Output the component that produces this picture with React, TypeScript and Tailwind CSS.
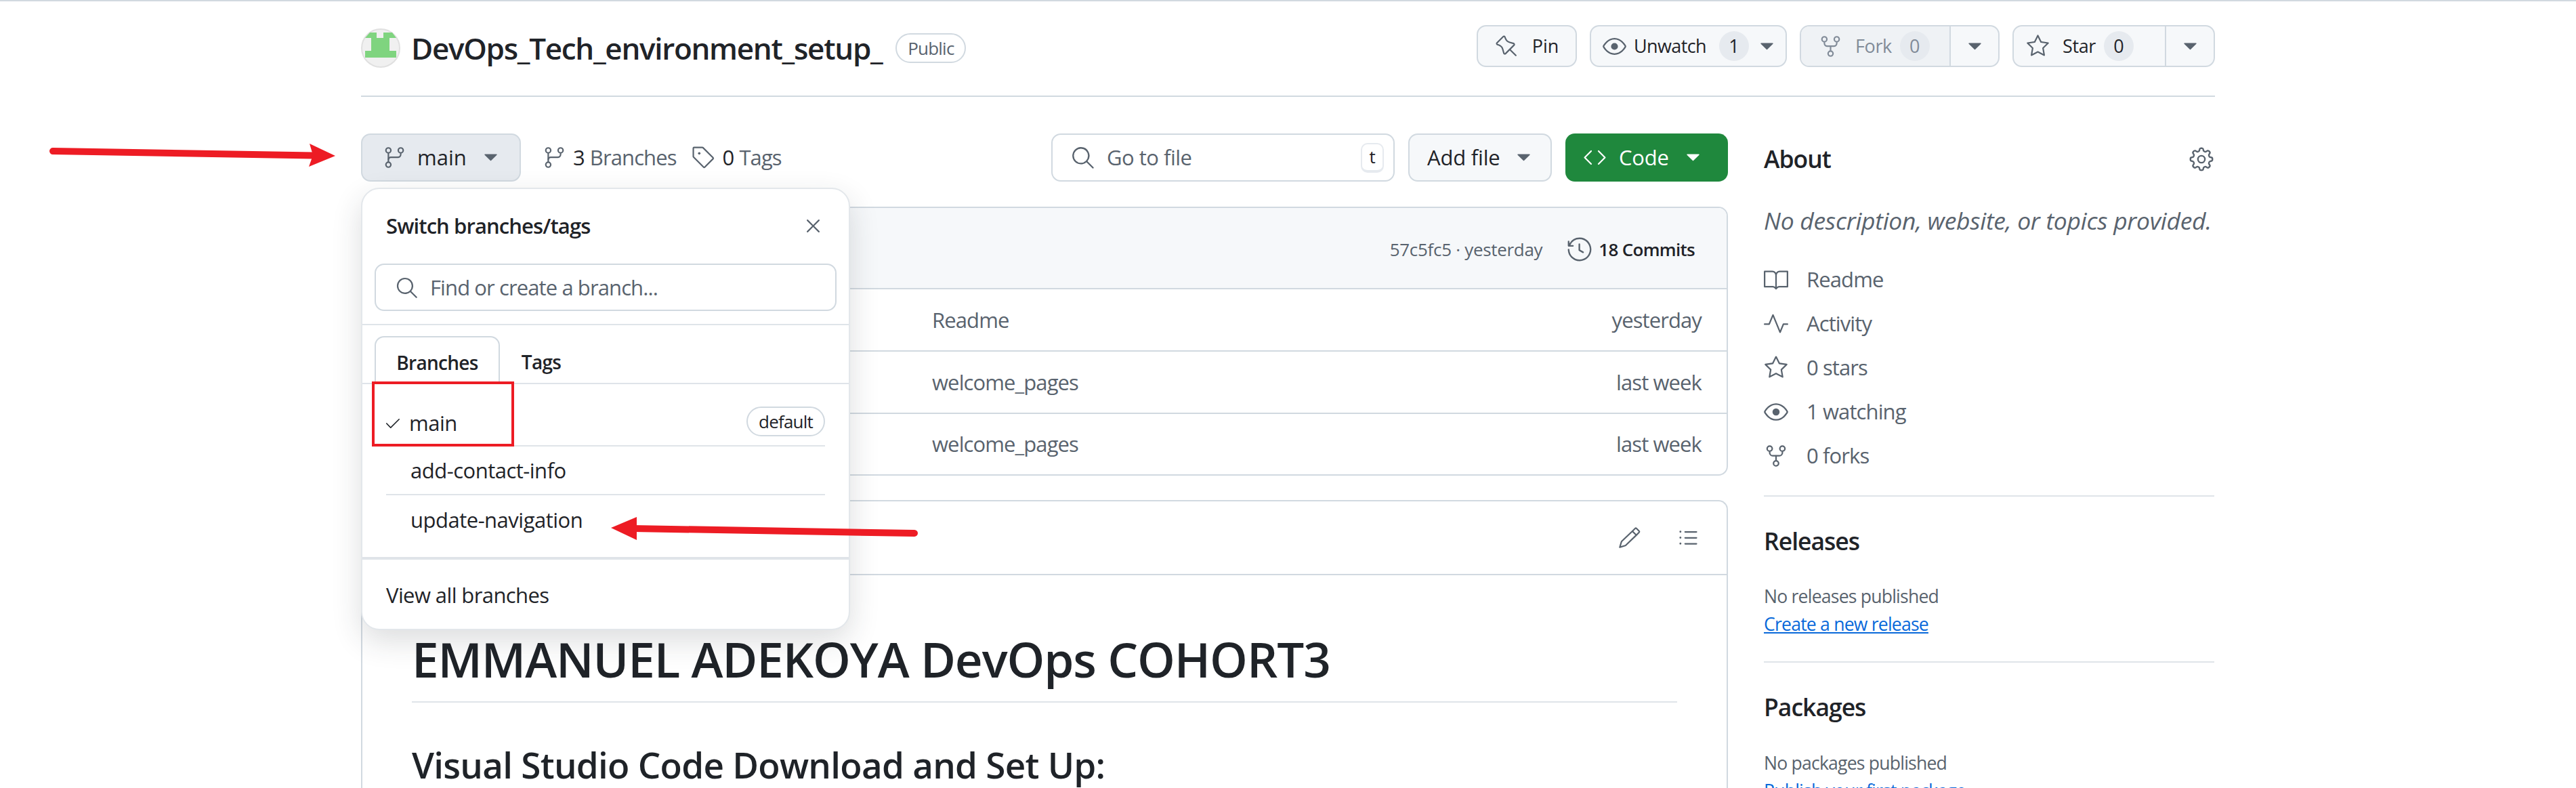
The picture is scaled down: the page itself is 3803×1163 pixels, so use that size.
import type { ReactNode } from "react";
import {
  GoBook,
  GoCheck,
  GoCode,
  GoEye,
  GoGear,
  GoGitBranch,
  GoHistory,
  GoListUnordered,
  GoPencil,
  GoPin,
  GoPulse,
  GoRepoForked,
  GoSearch,
  GoStar,
  GoTag,
  GoTriangleDown,
  GoX,
} from "react-icons/go";

const iconGray = "text-[#59636e]";

function Counter({ value, muted }: { value: string; muted?: boolean }) {
  return (
    <span
      className={`flex h-[44px] w-[44px] items-center justify-center rounded-full bg-[#e6eaef] text-[27px] ${
        muted ? "text-[#818b98]" : "text-[#1f2328]"
      }`}
    >
      {value}
    </span>
  );
}

function Caret({ className }: { className?: string }) {
  return <GoTriangleDown className={`h-[35px] w-[35px] ${className ?? iconGray}`} />;
}

function SplitButton({
  icon,
  label,
  count,
  width,
  left,
  disabled,
}: {
  icon: ReactNode;
  label: string;
  count: string;
  width: string;
  left: string;
  disabled?: boolean;
}) {
  return (
    <div className={`flex h-[62px] overflow-hidden rounded-[14px] border-2 border-[#d1d9e0] bg-[#f6f8fa] ${width}`}>
      <div
        className={`flex items-center border-r-2 border-[#d1d9e0] ${left} ${
          disabled ? "bg-[#eff2f5] text-[#818b98]" : "text-[#1f2328]"
        }`}
      >
        {icon}
        <span className="ml-[19px] text-[27px] font-medium tracking-[-0.4px]">{label}</span>
        <span className="ml-[12px]">
          <Counter value={count} muted={disabled} />
        </span>
      </div>
      <div className="flex flex-1 items-center justify-center">
        <Caret />
      </div>
    </div>
  );
}

function RepoHeader() {
  return (
    <div className="flex h-[106px] items-start justify-between border-b-2 border-[#d1d9e0]">
      <div className="mt-[5px] flex items-center">
        <div className="flex h-[58px] w-[58px] items-center justify-center rounded-full border-2 border-[#e0e0e0] bg-[#f0f0f0]">
          <svg viewBox="2 2 54 54" className="h-[54px] w-[54px]">
            <path
              d="M13 6 L23 6 L23 14 L33 14 L33 6 L46 6 L52 14 L42 14 L42 33 L52 33 L52 43 L6 43 L6 33 L15 33 L15 14 L6 14 Z"
              fill="#7fd47f"
            />
          </svg>
        </div>
        <h1 className="ml-[16px] text-[44px] font-semibold leading-none tracking-[-1.3px] text-[#1f2328]">
          DevOps_Tech_environment_setup_
        </h1>
        <span className="ml-[20px] flex h-[44px] w-[104px] items-center justify-center rounded-full border-2 border-[#d1d9e0] text-[26px] font-medium tracking-[-0.8px] text-[#59636e]">
          Public
        </span>
      </div>
      <div className="flex gap-[19px]">
        <div className="flex h-[62px] w-[148px] items-center justify-center gap-[20px] rounded-[14px] border-2 border-[#d1d9e0] bg-[#f6f8fa] text-[27px] font-medium text-[#1f2328]">
          <GoPin className={`h-[35px] w-[35px] ${iconGray}`} />
          Pin
        </div>
        <div className="flex h-[62px] w-[291px] items-center rounded-[14px] border-2 border-[#d1d9e0] bg-[#f6f8fa] pl-[17px] text-[27px] font-medium text-[#1f2328]">
          <GoEye className={`h-[35px] w-[35px] ${iconGray}`} />
          <span className="ml-[11px] tracking-[-0.6px]">Unwatch</span>
          <span className="ml-[19px]">
            <Counter value="1" />
          </span>
          <Caret className={`ml-[9px] ${iconGray}`} />
        </div>
        <SplitButton
          icon={<GoRepoForked className="h-[35px] w-[35px] text-[#818b98]" />}
          label="Fork"
          count="0"
          width="w-[295px]"
          left="w-[221px] pl-[26px]"
          disabled
        />
        <SplitButton
          icon={<GoStar className={`h-[35px] w-[35px] ${iconGray}`} />}
          label="Star"
          count="0"
          width="w-[299px]"
          left="w-[225px] pl-[18px]"
        />
      </div>
    </div>
  );
}

function Toolbar() {
  return (
    <div className="flex h-[71px] items-center">
      <div className="flex h-[71px] w-[236px] items-center rounded-[14px] border-2 border-[#d1d9e0] bg-[#e6eaef] pl-[30px] text-[31px] font-medium text-[#1f2328]">
        <GoGitBranch className={`h-[35px] w-[35px] ${iconGray}`} />
        <span className="ml-[16px]">main</span>
        <Caret className={`ml-[18px] ${iconGray}`} />
      </div>
      <div className="ml-[32px] flex items-center text-[31px] tracking-[-0.9px]">
        <GoGitBranch className={`h-[35px] w-[35px] ${iconGray}`} />
        <span className="ml-[10px] font-medium text-[#1f2328]">3</span>
        <span className="ml-[8px] text-[#59636e]">Branches</span>
        <GoTag className={`ml-[22px] h-[35px] w-[35px] ${iconGray}`} />
        <span className="ml-[11px] font-medium text-[#1f2328]">0</span>
        <span className="ml-[8px] text-[#59636e]">Tags</span>
      </div>
      <div className="ml-auto flex h-[71px] w-[507px] items-center rounded-[14px] border-2 border-[#d1d9e0] bg-white pl-[26px] pr-[14px] text-[31px] tracking-[-0.5px] text-[#59636e]">
        <GoSearch className={`h-[37px] w-[37px] ${iconGray}`} />
        <span className="ml-[17px]">Go to file</span>
        <span className="ml-auto flex h-[44px] w-[34px] items-center justify-center rounded-[10px] border-2 border-[#e6eaef] border-b-4 text-[26px] text-[#1f2328]">
          t
        </span>
      </div>
      <div className="ml-[20px] flex h-[71px] w-[212px] items-center rounded-[14px] border-2 border-[#d1d9e0] bg-[#f6f8fa] pl-[26px] text-[31px] font-medium tracking-[-0.2px] text-[#1f2328]">
        Add file
        <Caret className={`ml-[18px] ${iconGray}`} />
      </div>
      <div className="ml-[20px] flex h-[71px] w-[240px] items-center rounded-[14px] bg-[#1f883d] pl-[26px] text-[31px] font-medium tracking-[-0.2px] text-white">
        <GoCode className="h-[35px] w-[35px]" />
        <span className="ml-[18px]">Code</span>
        <Caret className="ml-[18px] text-white" />
      </div>
    </div>
  );
}

function FileTable() {
  const rows = [
    { message: "Readme", when: "yesterday", height: "h-[92px]" },
    { message: "welcome_pages", when: "last week", height: "h-[92px]" },
    { message: "welcome_pages", when: "last week", height: "h-[91px]" },
  ];
  return (
    <div className="mt-[37px] overflow-hidden rounded-[14px] border-2 border-[#d1d9e0]">
      <div className="flex h-[118px] items-center justify-end bg-[#f6f8fa] pr-[47px] pt-[4px] text-[26px]">
        <span className="tracking-[-0.3px] text-[#59636e]">57c5fc5 · yesterday</span>
        <GoHistory className={`ml-[36px] h-[38px] w-[38px] ${iconGray}`} />
        <span className="ml-[9px] font-semibold tracking-[-0.7px] text-[#1f2328]">18 Commits</span>
      </div>
      {rows.map((row, i) => (
        <div
          key={i}
          className={`flex items-center justify-between border-t-2 border-[#d1d9e0] pl-[841px] pr-[37px] text-[31px] tracking-[-0.9px] text-[#59636e] ${row.height}`}
        >
          <span>{row.message}</span>
          <span>{row.when}</span>
        </div>
      ))}
    </div>
  );
}

function Readme() {
  return (
    <div className="mt-[36px] h-[500px] rounded-t-[14px] border-x-2 border-t-2 border-[#d1d9e0]">
      <div className="flex h-[109px] items-center justify-end gap-[52px] border-b-2 border-[#d1d9e0] pr-[39px]">
        <GoPencil className={`h-[35px] w-[35px] ${iconGray}`} />
        <GoListUnordered className={`h-[35px] w-[35px] ${iconGray}`} />
      </div>
      <div className="px-[73px]">
        <h1 className="mt-[76px] border-b-2 border-[#dfe4e9] pb-[14px] text-[71px] font-semibold leading-[96px] tracking-[-1.1px] text-[#1f2328]">
          EMMANUEL ADEKOYA DevOps COHORT3
        </h1>
        <h2 className="mt-[56px] text-[53px] font-semibold leading-[72px] tracking-[-0.75px] text-[#1f2328]">
          Visual Studio Code Download and Set Up:
        </h2>
      </div>
    </div>
  );
}

function BranchMenu() {
  return (
    <div className="absolute left-[533px] top-[277px] z-10 h-[653px] w-[722px] overflow-hidden rounded-[27px] border-2 border-[#e3e7eb] bg-white shadow-[0_16px_44px_rgba(37,41,47,0.16)]">
      <div className="flex h-[110px] items-center justify-between pb-[2px] pl-[35px] pr-[35px]">
        <span className="text-[31px] font-semibold tracking-[-0.9px] text-[#1f2328]">Switch branches/tags</span>
        <GoX className={`h-[35px] w-[35px] ${iconGray}`} />
      </div>
      <div className="mx-[18px] flex h-[70px] items-center rounded-[14px] border-2 border-[#d1d9e0] pl-[28px] text-[31px] tracking-[-0.9px] text-[#59636e]">
        <GoSearch className={`h-[35px] w-[35px] ${iconGray}`} />
        <span className="ml-[17px]">Find or create a branch...</span>
      </div>
      <div className="mt-[19px] flex h-[89px] items-end border-y-2 border-[#dfe4e9] pl-[18px] pt-[18px]">
        <div className="-mb-[2px] flex h-[71px] w-[185px] items-center justify-center rounded-t-[14px] border-2 border-b-0 border-[#d1d9e0] bg-white pt-[4px] text-[28px] font-semibold tracking-[-0.7px] text-[#1f2328]">
          Branches
        </div>
        <div className="-mb-[2px] flex h-[71px] w-[122px] items-center justify-center pt-[4px] text-[28px] font-semibold tracking-[-0.7px] text-[#1f2328]">
          Tags
        </div>
      </div>
      <div className="mx-[35px] text-[31px] tracking-[-0.5px] text-[#1f2328]">
        <div className="flex h-[92px] items-center justify-between border-b-2 border-[#dfe4e9] pt-[20px]">
          <div className="flex items-center pt-[5px]">
            <GoCheck className="-ml-[3px] h-[26px] w-[26px]" />
            <span className="ml-[11px]">main</span>
          </div>
          <span className="flex h-[44px] w-[116px] items-center justify-center rounded-full border-2 border-[#d1d9e0] text-[26px] font-medium tracking-[-0.8px]">
            default
          </span>
        </div>
        <div className="flex h-[72px] items-center border-b-2 border-[#dfe4e9] pl-[36px]">add-contact-info</div>
        <div className="flex h-[72px] items-center pl-[36px]">update-navigation</div>
      </div>
      <div className="mt-[19px] flex h-[108px] items-center border-t-4 border-[#dfe4e9] pl-[35px] text-[31px] tracking-[-0.6px] text-[#1f2328]">
        View all branches
      </div>
    </div>
  );
}

function AboutRow({ icon, children }: { icon: ReactNode; children: ReactNode }) {
  return (
    <div className="flex h-[65px] items-center gap-[27px] text-[31px] tracking-[-0.9px] text-[#59636e]">
      {icon}
      <span>{children}</span>
    </div>
  );
}

function Sidebar() {
  const iconClass = `h-[36px] w-[36px] ${iconGray}`;
  return (
    <aside className="ml-[53px] w-[665px] shrink-0 text-[#1f2328]">
      <div className="flex h-[71px] items-center justify-between pt-[5px]">
        <h2 className="text-[35.5px] font-semibold tracking-[-1px]">About</h2>
        <GoGear className="h-[38px] w-[38px] text-[#59636e]" />
      </div>
      <p className="mt-[32px] whitespace-nowrap text-[35.5px] italic leading-[50px] tracking-[-0.3px] text-[#59636e]">
        No description, website, or topics provided.
      </p>
      <div className="mt-[30px]">
        <AboutRow icon={<GoBook className={iconClass} />}>Readme</AboutRow>
        <AboutRow icon={<GoPulse className={iconClass} />}>Activity</AboutRow>
        <AboutRow icon={<GoStar className={iconClass} />}>0 stars</AboutRow>
        <AboutRow icon={<GoEye className={iconClass} />}>1 watching</AboutRow>
        <AboutRow icon={<GoRepoForked className={iconClass} />}>0 forks</AboutRow>
      </div>
      <section className="mt-[26px] h-[245px] border-t-2 border-[#dfe4e9] pt-[43px]">
        <h2 className="text-[35.5px] font-semibold leading-[44px] tracking-[-1px]">Releases</h2>
        <p className="mt-[40px] text-[26.6px] leading-[40px] tracking-[-0.8px] text-[#59636e]">No releases published</p>
        <a className="mt-[1px] block text-[26.6px] leading-[40px] tracking-[-0.8px] text-[#0969da] underline">Create a new release</a>
      </section>
      <section className="h-[245px] border-t-2 border-[#dfe4e9] pt-[43px]">
        <h2 className="text-[35.5px] font-semibold leading-[44px] tracking-[-1px]">Packages</h2>
        <p className="mt-[41px] text-[26.6px] leading-[40px] tracking-[-0.8px] text-[#59636e]">No packages published</p>
        <a className="mt-[1px] block text-[26.6px] leading-[40px] tracking-[-0.8px] text-[#0969da] underline">Publish your first package</a>
      </section>
    </aside>
  );
}

function Annotations() {
  return (
    <>
      <div className="absolute left-[549px] top-[563px] z-20 h-[96px] w-[210px] border-4 border-[#ed1c24]" />
      <svg className="absolute left-0 top-0 z-20 h-[1163px] w-[3803px]" viewBox="0 0 3803 1163" fill="none">
        <path d="M78 223 L462 229.5" stroke="#ed1c24" strokeWidth="10" strokeLinecap="round" />
        <path d="M457 212 L495 230 L456 246 L462 229 Z" fill="#ed1c24" />
        <path d="M1350 787 L935 780" stroke="#ed1c24" strokeWidth="10" strokeLinecap="round" />
        <path d="M902 779 L940 763 L940 797 Z" fill="#ed1c24" />
      </svg>
    </>
  );
}

export default function App() {
  return (
    <div className="relative h-[1163px] w-[3803px] overflow-hidden bg-white font-['Open_Sans','Noto_Sans',sans-serif]">
      <div className="h-[37px] border-t-2 border-[#d1d9e0]" />
      <div className="ml-[533px] w-[2737px]">
        <RepoHeader />
        <div className="mt-[54px] flex">
          <main className="w-[2018px] shrink-0">
            <Toolbar />
            <FileTable />
            <Readme />
          </main>
          <Sidebar />
        </div>
      </div>
      <BranchMenu />
      <Annotations />
    </div>
  );
}
